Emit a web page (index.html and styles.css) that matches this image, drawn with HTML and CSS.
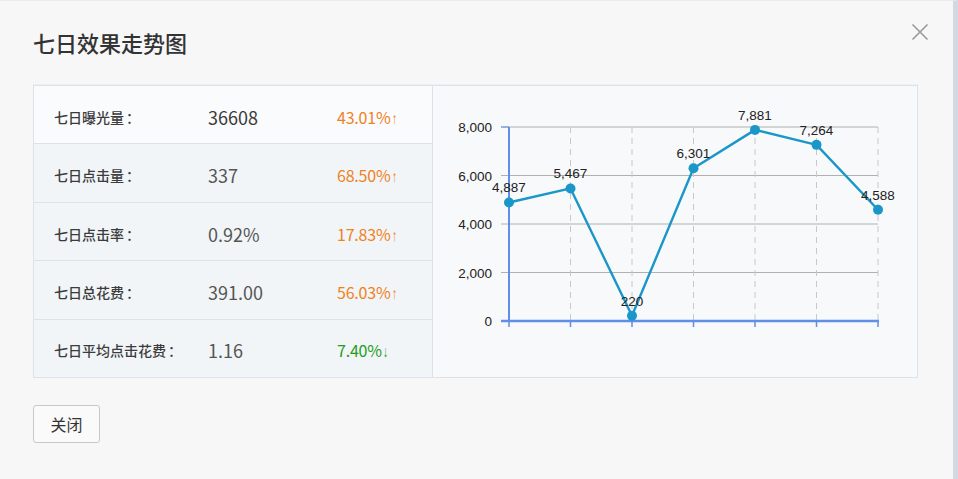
FILE: index.html
```html
<!DOCTYPE html>
<html lang="zh-CN">
<head>
    <meta charset="UTF-8">
    <meta name="viewport" content="width=device-width, initial-scale=1.0">
    <title>七日效果走势图</title>
    <link rel="stylesheet" href="styles.css">
</head>
<body>
    <div class="dialog">
        <div class="dialog-header">
            <h1>七日效果走势图</h1>
            <a href="#" class="close-x" title="关闭">
                <svg width="18" height="18" viewBox="0 0 18 18">
                    <path d="M1.5 1.5 L16.5 16.5 M16.5 1.5 L1.5 16.5" stroke="#9a9a9a" stroke-width="1.6" fill="none"/>
                </svg>
            </a>
        </div>
        <div class="panel">
            <div class="stats">
                <div class="stat-row first">
                    <span class="stat-label">七日曝光量<span class="colon">：</span></span>
                    <span class="stat-value strong">36608</span>
                    <span class="stat-rate up">43.01%<span class="arrow">↑</span></span>
                </div>
                <div class="stat-row">
                    <span class="stat-label">七日点击量<span class="colon">：</span></span>
                    <span class="stat-value">337</span>
                    <span class="stat-rate up">68.50%<span class="arrow">↑</span></span>
                </div>
                <div class="stat-row">
                    <span class="stat-label">七日点击率<span class="colon">：</span></span>
                    <span class="stat-value">0.92%</span>
                    <span class="stat-rate up">17.83%<span class="arrow">↑</span></span>
                </div>
                <div class="stat-row">
                    <span class="stat-label">七日总花费<span class="colon">：</span></span>
                    <span class="stat-value">391.00</span>
                    <span class="stat-rate up">56.03%<span class="arrow">↑</span></span>
                </div>
                <div class="stat-row">
                    <span class="stat-label">七日平均点击花费<span class="colon">：</span></span>
                    <span class="stat-value">1.16</span>
                    <span class="stat-rate down">7.40%<span class="arrow">↓</span></span>
                </div>
            </div>
            <div class="chart">
                <svg id="trend" width="484" height="291" viewBox="0 0 484 291"></svg>
            </div>
        </div>
        <div class="dialog-footer">
            <button class="btn">关闭</button>
        </div>
    </div>
    <script>
        // 七日数据
        const values = [4887, 5467, 220, 6301, 7881, 7264, 4588];
        const svg = document.getElementById('trend');
        const NS = 'http://www.w3.org/2000/svg';
        const axisLeft = 76, axisRight = 445, axisTop = 41, axisBottom = 235, maxValue = 8000;

        function el(name, attrs, text) {
            const node = document.createElementNS(NS, name);
            for (const k in attrs) node.setAttribute(k, attrs[k]);
            if (text !== undefined) node.textContent = text;
            svg.appendChild(node);
            return node;
        }

        function fmt(n) {
            return n.toString().replace(/\B(?=(\d{3})+(?!\d))/g, ',');
        }

        const step = (axisRight - axisLeft) / (values.length - 1);
        const xs = values.map((v, i) => axisLeft + i * step);
        const ys = values.map(v => axisBottom - v / maxValue * (axisBottom - axisTop));

        // 横向网格线和Y轴刻度
        for (let i = 0; i <= 4; i++) {
            const y = axisBottom - i * (axisBottom - axisTop) / 4;
            if (i > 0) {
                el('line', { x1: 68, y1: y, x2: axisRight, y2: y, stroke: '#b0b0b0', 'stroke-width': 1 });
            }
            el('text', { x: 59, y: y + 5, 'text-anchor': 'end', class: 'axis-label' }, fmt(i * 2000));
        }

        // 纵向虚线
        xs.slice(1).forEach(x => {
            el('line', { x1: x, y1: axisTop, x2: x, y2: axisBottom, stroke: '#c8c8c8', 'stroke-width': 1, 'stroke-dasharray': '6,5' });
        });

        // 坐标轴
        el('line', { x1: axisLeft, y1: axisTop, x2: axisLeft, y2: axisBottom + 1, stroke: '#5f8fe6', 'stroke-width': 2 });
        el('line', { x1: 68, y1: axisTop, x2: axisLeft, y2: axisTop, stroke: '#5f8fe6', 'stroke-width': 1 });
        el('line', { x1: 68, y1: axisBottom, x2: axisRight + 1, y2: axisBottom, stroke: '#5f8fe6', 'stroke-width': 2.5 });
        xs.forEach(x => {
            el('line', { x1: x, y1: axisBottom, x2: x, y2: axisBottom + 6, stroke: '#5f8fe6', 'stroke-width': 1.5 });
        });

        // 折线
        el('polyline', {
            points: xs.map((x, i) => x + ',' + ys[i]).join(' '),
            fill: 'none', stroke: '#1a97c8', 'stroke-width': 2.4, 'stroke-linejoin': 'round'
        });
        xs.forEach((x, i) => {
            el('circle', { cx: x, cy: ys[i], r: 5, fill: '#1a97c8' });
        });
        xs.forEach((x, i) => {
            el('text', { x: x, y: ys[i] - 10, 'text-anchor': 'middle', class: 'point-label' }, fmt(values[i]));
        });
    </script>
</body>
</html>
```

FILE: styles.css
```css
html, body {
    margin: 0;
    padding: 0;
}
body {
    font-family: "Noto Sans CJK SC", "Liberation Sans", sans-serif;
    background-color: #f7f7f7;
    color: #333;
    width: 958px;
    height: 479px;
    overflow: hidden;
}
.dialog {
    position: relative;
    box-sizing: border-box;
    height: 479px;
    padding: 0 35px 0 33px;
    border-top: 1px solid #ececec;
    border-right: 5px solid #d3d9e4;
}
.dialog-header {
    height: 84px;
    box-sizing: border-box;
    padding-top: 26px;
    border-bottom: 1px dotted #e6eaef;
}
.dialog-header h1 {
    margin: 0;
    font-size: 22px;
    font-weight: 500;
    line-height: 30px;
    color: #333;
}
.close-x {
    position: absolute;
    top: 22px;
    right: 24px;
    display: block;
    width: 18px;
    height: 18px;
}
.close-x svg {
    display: block;
}
.panel {
    display: flex;
    height: 293px;
    box-sizing: border-box;
    border: 1px solid #dbe2ea;
}
.stats {
    display: flex;
    flex-direction: column;
    width: 400px;
    box-sizing: border-box;
    border-right: 1px solid #dbe2ea;
}
.stat-row {
    flex: 1;
    display: flex;
    align-items: center;
    box-sizing: border-box;
    padding: 4px 0 0 20px;
    background-color: #f1f5f7;
    border-top: 1px solid #dbe2ea;
}
.stat-row.first {
    background-color: #fafbfc;
    border-top: none;
}
.stat-label {
    width: 154px;
    font-size: 14px;
    font-weight: 500;
    color: #3c3c3c;
}
.stat-label .colon {
    font-family: "Noto Sans CJK TC", sans-serif;
    margin-left: 2px;
}
.stat-value {
    width: 129px;
    font-size: 18px;
    color: #555;
}
.stat-value.strong {
    color: #3a3a3a;
}
.stat-rate {
    font-size: 16px;
    letter-spacing: -0.2px;
}
.stat-rate .arrow {
    font-family: "Liberation Sans", sans-serif;
    font-weight: bold;
    display: inline-block;
    transform: scaleX(0.6);
    transform-origin: left center;
    margin-left: 1px;
}
.up {
    color: #f0821e;
}
.down {
    color: #1f9e24;
}
.chart {
    flex: 1;
    background-color: #f8f9fa;
}
.chart svg {
    display: block;
}
.axis-label,
.point-label {
    font-family: "Liberation Sans", Arial, sans-serif;
    font-size: 13.5px;
    fill: #222;
}
.dialog-footer {
    padding-top: 27px;
}
.btn {
    width: 67px;
    height: 38px;
    padding: 0;
    font-family: "Noto Sans CJK SC", sans-serif;
    font-size: 16px;
    color: #333;
    background-color: #fafafa;
    border: 1px solid #c8c8c8;
    border-radius: 3px;
    cursor: pointer;
}
.btn:hover {
    background-color: #f0f0f0;
}
```
